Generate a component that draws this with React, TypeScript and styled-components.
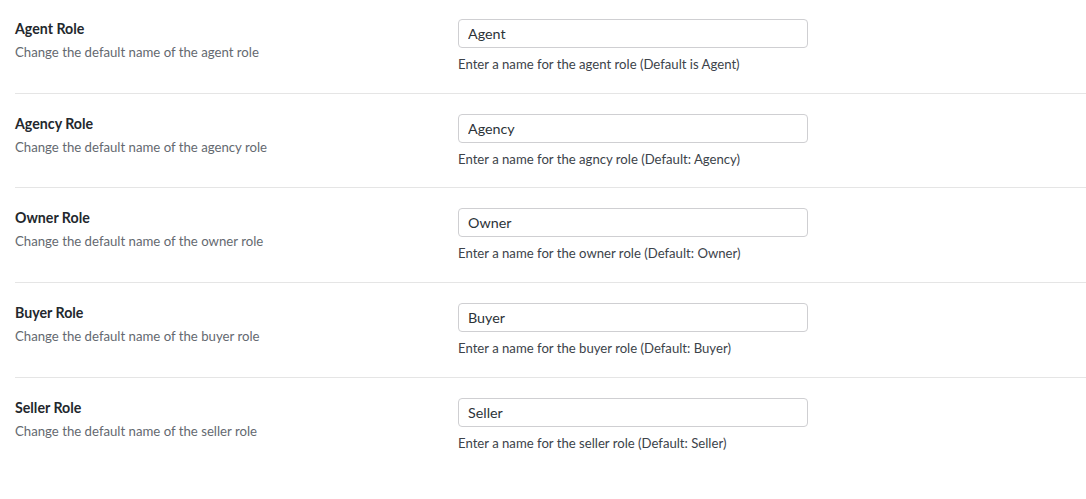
import React from "react";
import styled, { createGlobalStyle } from "styled-components";

const Global = createGlobalStyle`
  html, body { margin: 0; padding: 0; background: #ffffff; }
  body { font-family: Lato, "Noto Sans", sans-serif; }
  * { box-sizing: border-box; }
`;

const Page = styled.div`
  padding-left: 15px;
  width: 1086px;
`;

const Row = styled.div`
  display: grid;
  grid-template-columns: 443px 350px;
  padding: 20px 0 20px;
  border-bottom: 1px solid #e5e5e5;
  height: 94.67px;
  &:first-child { padding-top: 19px; height: 93.67px; }
  &:last-child { border-bottom: none; }
`;

const Label = styled.div`
  display: flex;
  flex-direction: column;
  padding-top: 1px;
`;

const Title = styled.div`
  font-size: 14.2px;
  font-weight: 700;
  color: #23282d;
  line-height: 17px;
`;

const Desc = styled.div`
  margin-top: 7px;
  font-size: 13.2px;
  color: #646970;
  line-height: 17px;
`;

const Field = styled.div`
  display: flex;
  flex-direction: column;
`;

const Input = styled.input`
  width: 350px;
  height: 29px;
  border: 1px solid #cfcfd2;
  border-radius: 4px;
  padding: 0 9px;
  font-family: Lato, "Noto Sans", sans-serif;
  font-size: 14.3px;
  color: #2c3338;
  background: #fff;
  outline: none;
`;

const Help = styled.div`
  margin-top: 8px;
  font-size: 13.15px;
  color: #3c434a;
  line-height: 16px;
`;

const rows = [
  { title: "Agent Role", desc: "Change the default name of the agent role", value: "Agent", help: "Enter a name for the agent role (Default is Agent)" },
  { title: "Agency Role", desc: "Change the default name of the agency role", value: "Agency", help: "Enter a name for the agncy role (Default: Agency)" },
  { title: "Owner Role", desc: "Change the default name of the owner role", value: "Owner", help: "Enter a name for the owner role (Default: Owner)" },
  { title: "Buyer Role", desc: "Change the default name of the buyer role", value: "Buyer", help: "Enter a name for the buyer role (Default: Buyer)" },
  { title: "Seller Role", desc: "Change the default name of the seller role", value: "Seller", help: "Enter a name for the seller role (Default: Seller)" },
];

export default function App() {
  return (
    <>
      <Global />
      <Page>
        {rows.map((r) => (
          <Row key={r.title}>
            <Label>
              <Title>{r.title}</Title>
              <Desc>{r.desc}</Desc>
            </Label>
            <Field>
              <Input defaultValue={r.value} />
              <Help>{r.help}</Help>
            </Field>
          </Row>
        ))}
      </Page>
    </>
  );
}
